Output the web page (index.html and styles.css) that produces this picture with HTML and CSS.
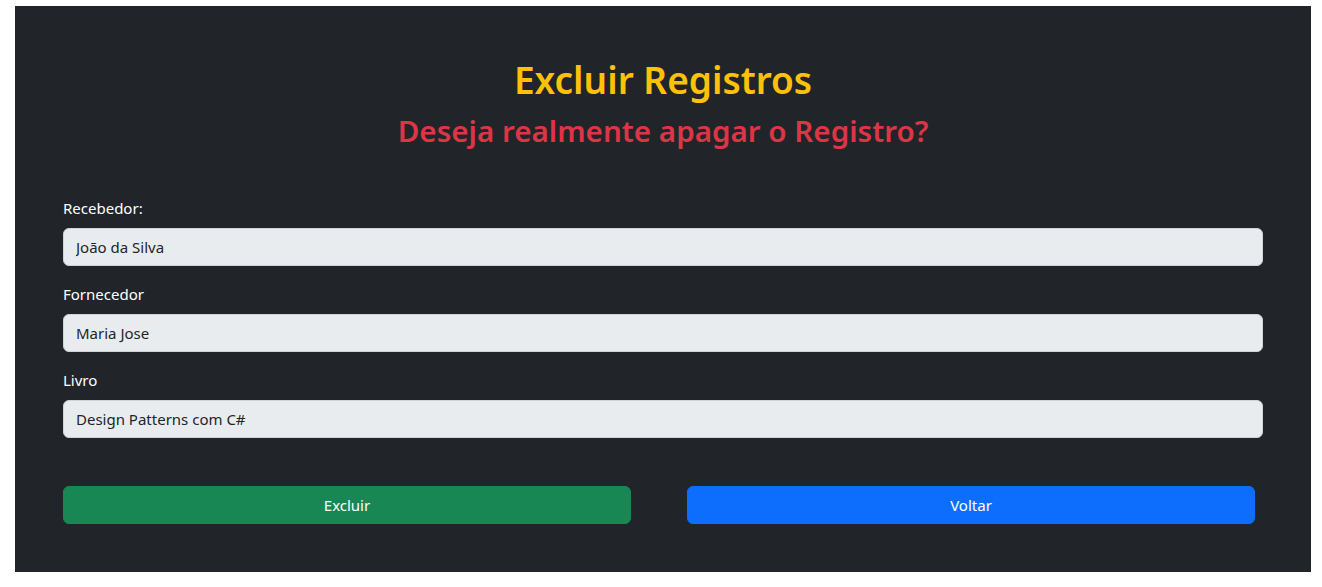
FILE: index.html
```html
<!DOCTYPE html>
<html lang="pt-BR">
<head>
<meta charset="utf-8">
<title>Excluir Registros</title>
<link rel="stylesheet" href="styles.css">
</head>
<body>
<div class="page">
  <main class="panel">
    <header class="heading">
      <h1 class="title">Excluir Registros</h1>
      <h2 class="subtitle">Deseja realmente apagar o Registro?</h2>
    </header>
    <form class="form">
      <div class="field">
        <label class="label">Recebedor:</label>
        <input class="input" type="text" value="João da Silva" disabled>
      </div>
      <div class="field">
        <label class="label">Fornecedor</label>
        <input class="input" type="text" value="Maria Jose" disabled>
      </div>
      <div class="field">
        <label class="label">Livro</label>
        <input class="input" type="text" value="Design Patterns com C#" disabled>
      </div>
      <div class="actions">
        <button type="button" class="btn btn-success">Excluir</button>
        <button type="button" class="btn btn-primary">Voltar</button>
      </div>
    </form>
  </main>
</div>
</body>
</html>
```
FILE: styles.css
```css
* { box-sizing: border-box; }
html, body { margin: 0; background: #fff; }
body {
  font-family: "Noto Sans", "Open Sans", "Liberation Sans", sans-serif;
  font-size: 16px;
  line-height: 1.5;
  color: #fff;
}
.page {
  padding: 6px 11px 15px 15px;
}
.panel {
  background: #212529;
  height: 566px;
  padding: 50px 48px 48px 48px;
}
.heading { text-align: center; }
.title {
  margin: 0 0 8px;
  font-size: 37px;
  font-weight: 600;
  line-height: 48px;
  color: #ffc107;
}
.subtitle {
  margin: 0;
  font-size: 29.6px;
  font-weight: 600;
  line-height: 38px;
  color: #dc3545;
}
.form { margin-top: 46px; }
.field { margin-bottom: 16px; }
.label {
  display: block;
  margin-bottom: 8px;
  font-size: 15px;
  line-height: 24px;
  color: #fff;
}
.input {
  display: block;
  width: 100%;
  height: 38px;
  padding: 6px 12px;
  font-family: inherit;
  font-size: 15px;
  color: #212529;
  background: #e9ecef;
  border: 1px solid #ced4da;
  border-radius: 6px;
  opacity: 1;
}
.actions {
  display: flex;
  gap: 56px;
  padding-top: 32px;
  padding-right: 8px;
}
.btn {
  flex: 1;
  height: 38px;
  border: 1px solid transparent;
  border-radius: 6px;
  font-family: inherit;
  font-size: 15px;
  color: #fff;
  cursor: pointer;
}
.btn-success { background: #198754; border-color: #198754; }
.btn-primary { background: #0d6efd; border-color: #0d6efd; }
```
